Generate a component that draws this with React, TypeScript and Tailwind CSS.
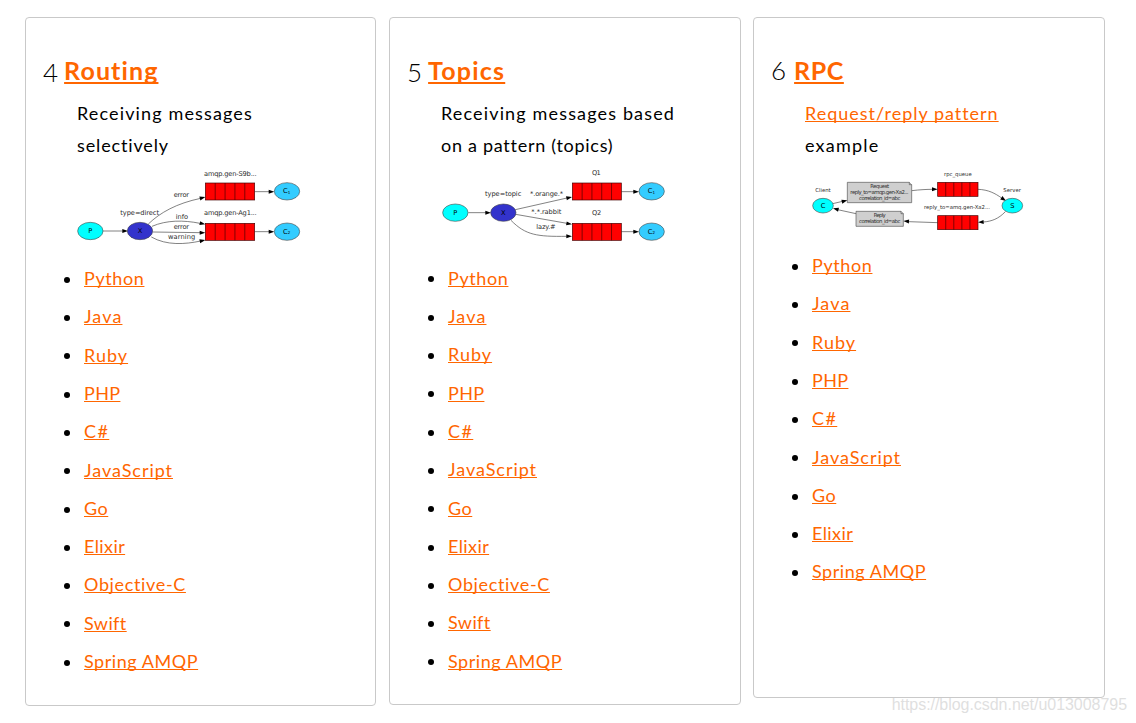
import type { ReactNode } from 'react'

type Tutorial = {
  num: string
  title: string
  numClass: string
  titleClass: string
  cardClass: string
  diagramClass: string
  listClass: string
  description: ReactNode
  diagram: ReactNode
  languages: string[]
}

const allLanguages = [
  'Python',
  'Java',
  'Ruby',
  'PHP',
  'C#',
  'JavaScript',
  'Go',
  'Elixir',
  'Objective-C',
  'Swift',
  'Spring AMQP',
]

const rpcLanguages = allLanguages.filter(
  (l) => l !== 'Objective-C' && l !== 'Swift'
)

const tracking: Record<string, string> = {
  Python: 'tracking-[0.6px]',
  Java: 'tracking-[1.1px]',
  Ruby: 'tracking-[1px]',
  PHP: 'tracking-[0.35px]',
  'C#': 'tracking-[1.4px]',
  JavaScript: 'tracking-[0.95px]',
  Go: 'tracking-[0.5px]',
  Elixir: 'tracking-[0.4px]',
  'Objective-C': 'tracking-[0.65px]',
  Swift: 'tracking-[0.4px]',
  'Spring AMQP': 'tracking-[0.55px]',
}

const linkClass =
  'text-[#ff6600] underline decoration-1 underline-offset-[1px] [text-decoration-skip-ink:none]'

type NodeProps = { x: number; y: number; label: string; fill: string; rx?: number; ry?: number; sub?: string }
const Ellipse = ({ x, y, label, fill, rx = 38, ry = 26, sub }: NodeProps) => (
  <g>
    <ellipse cx={x} cy={y} rx={rx} ry={ry} fill={fill} stroke="#444" strokeWidth={1.8} />
    <text x={sub ? x - 1 : x} y={y + 6} textAnchor="middle" fontSize={20} fill="#000">
      {label}
      {sub && (
        <tspan fontSize={12} dy={2}>
          {sub}
        </tspan>
      )}
    </text>
  </g>
)

type QueueProps = { x: number; y: number; w: number; h: number }
const Queue = ({ x, y, w, h }: QueueProps) => (
  <g stroke="#400" strokeWidth={2}>
    <rect x={x} y={y} width={w} height={h} fill="#ff0000" />
    {[1, 2, 3, 4].map((i) => (
      <line key={i} x1={x + (w * i) / 5} x2={x + (w * i) / 5} y1={y} y2={y + h} />
    ))}
  </g>
)

// arrow line ends at the base of the head, the head is 17 units long
const Arrow = ({ d, x, y, angle = 0 }: { d: string; x: number; y: number; angle?: number }) => (
  <g>
    <path d={d} fill="none" stroke="#444" strokeWidth={2} />
    <path d="M0 0L-17 -6V6Z" fill="#000" transform={`translate(${x} ${y}) rotate(${angle})`} />
  </g>
)

const svgText = 'font-["DejaVu_Sans",sans-serif] fill-[#2b2b2b]'

const RoutingDiagram = () => (
  <svg viewBox="0 0 720 270" className={`block h-[90px] w-60 ${svgText}`} fontSize={20}>
    <Arrow d="M99 213H158" x={174} y={213} />
    <Arrow d="M235 192C270 158 320 130 392 115" x={406} y={111} angle={-15} />
    <Arrow d="M246 199C290 180 340 180 390 190" x={406} y={193} angle={12} />
    <Arrow d="M249 216L390 218" x={406} y={218} />
    <Arrow d="M244 231C290 257 345 253 392 243" x={406} y={240} angle={-12} />
    <Arrow d="M554 95H598" x={613} y={95} />
    <Arrow d="M554 215H598" x={613} y={215} />
    <Ellipse x={61} y={213} label="P" fill="#00ffff" />
    <Ellipse x={210} y={213} label="X" fill="#3333cc" />
    <Queue x={406} y={69} w={148} h={51} />
    <Queue x={406} y={190} w={148} h={51} />
    <Ellipse x={651} y={94} label="C" sub="1" fill="#33ccff" />
    <Ellipse x={651} y={215} label="C" sub="2" fill="#33ccff" />
    <text x={151} y={164} textLength={116}>type=direct</text>
    <text x={311} y={112} textLength={46}>error</text>
    <text x={317} y={177} textLength={37}>info</text>
    <text x={311} y={207} textLength={46}>error</text>
    <text x={294} y={236} textLength={82}>warning</text>
    <text x={402} y={47} textLength={158}>amqp.gen-S9b...</text>
    <text x={402} y={166} textLength={158}>amqp.gen-Ag1...</text>
  </svg>
)

const TopicsDiagram = () => (
  <svg viewBox="0 0 720 270" className={`block h-[90px] w-60 ${svgText}`} fontSize={20}>
    <Arrow d="M103 158H156" x={171} y={158} />
    <Arrow d="M244 149L399 114" x={414} y={111} angle={-12} />
    <Arrow d="M245 163L399 190" x={414} y={193} angle={10} />
    <Arrow d="M231 181C275 226 310 230 398 229" x={414} y={229} />
    <Arrow d="M562 95H600" x={615} y={95} />
    <Arrow d="M562 215H600" x={615} y={215} />
    <Ellipse x={64} y={158} label="P" fill="#00ffff" />
    <Ellipse x={208} y={158} label="X" fill="#3333cc" />
    <Queue x={415} y={69} w={147} h={51} />
    <Queue x={415} y={190} w={147} h={51} />
    <Ellipse x={653} y={94} label="C" sub="1" fill="#33ccff" />
    <Ellipse x={653} y={215} label="C" sub="2" fill="#33ccff" />
    <text x={153} y={108} textLength={109}>type=topic</text>
    <text x={288} y={108} textLength={99}>*.orange.*</text>
    <text x={292} y={162} textLength={90}>*.*.rabbit</text>
    <text x={307} y={208} textLength={58}>lazy.#</text>
    <text x={474} y={46} textLength={26}>Q1</text>
    <text x={474} y={165} textLength={28}>Q2</text>
  </svg>
)

const RpcDiagram = () => (
  <svg viewBox="0 0 720 231" className={`block h-[77px] w-60 ${svgText}`} fontSize={16}>
    <Arrow d="M98 131L128 124" x={142} y={121} angle={-14} />
    <Arrow d="M335 92C360 89 380 88 398 88" x={413} y={88} />
    <Arrow d="M534 88C565 89 585 100 605 114" x={618} y={123} angle={35} />
    <Arrow d="M616 155C595 177 575 184 550 186" x={534} y={187} angle={176} />
    <Arrow d="M413 188L326 185" x={310} y={183} angle={184} />
    <Arrow d="M168 161L113 149" x={99} y={145} angle={194} />
    <g stroke="#555" strokeWidth={2} fill="#cfcfcf">
      <path d="M142 67H328L335 74V128H142Z" />
      <path d="M328 67V74H335" />
      <path d="M168 154H303L310 161V199H168Z" />
      <path d="M303 154V161H310" />
    </g>
    <Ellipse x={69} y={137} label="C" fill="#00ffff" rx={31} ry={22} />
    <Ellipse x={637} y={137} label="S" fill="#00ffff" rx={31} ry={22} />
    <Queue x={413} y={67} w={121} h={42} />
    <Queue x={413} y={167} w={121} h={42} />
    <text x={46} y={97} textLength={46}>Client</text>
    <text x={610} y={97} textLength={53}>Server</text>
    <text x={432} y={48} textLength={83}>rpc_queue</text>
    <text x={372} y={147} textLength={198}>reply_to=amq.gen-Xa2...</text>
    <text x={211} y={84} textLength={56}>Request</text>
    <text x={151} y={102} textLength={174}>reply_to=amqp.gen-Xa2...</text>
    <text x={177} y={119} textLength={124}>correlation_id=abc</text>
    <text x={221} y={172} textLength={36}>Reply</text>
    <text x={177} y={190} textLength={124}>correlation_id=abc</text>
  </svg>
)

const tutorials: Tutorial[] = [
  {
    num: '4',
    title: 'Routing',
    numClass: 'align-[-2px]',
    titleClass: 'tracking-[1.1px]',
    cardClass: 'h-[689px] w-[351px]',
    diagramClass: 'pl-11',
    listClass: 'pt-[10.9px]',
    description: (
      <>
        <span className="tracking-[1.14px]">Receiving messages</span>
        <br />
        <span className="tracking-[0.86px]">selectively</span>
      </>
    ),
    diagram: <RoutingDiagram />,
    languages: allLanguages,
  },
  {
    num: '5',
    title: 'Topics',
    numClass: 'align-[-2px]',
    titleClass: 'tracking-[1.2px]',
    cardClass: 'h-[688px] w-[352px]',
    diagramClass: 'pl-11',
    listClass: 'pt-[10.6px]',
    description: (
      <>
        <span className="tracking-[1.15px]">Receiving messages based</span>
        <br />
        <span className="tracking-[0.72px]">on a pattern (topics)</span>
      </>
    ),
    diagram: <TopicsDiagram />,
    languages: allLanguages,
  },
  {
    num: '6',
    title: 'RPC',
    numClass: '',
    titleClass: 'ml-0.5 tracking-[0.55px]',
    cardClass: 'h-[681px] w-[352px]',
    diagramClass: 'pl-[46px]',
    listClass: 'pt-[10.9px]',
    description: (
      <>
        <a href="#" className={`${linkClass} tracking-[0.98px]`}>
          Request/reply pattern
        </a>
        <br />
        <span className="tracking-[1.2px]">example</span>
      </>
    ),
    diagram: <RpcDiagram />,
    languages: rpcLanguages,
  },
]

const Card = ({ tutorial }: { tutorial: Tutorial }) => (
  <div className={`rounded border border-[#c9c9c9] pt-8 ${tutorial.cardClass}`}>
    <h3 className="flex h-10 items-baseline gap-1.5 pl-[17px] text-[25px] leading-10 whitespace-nowrap">
      <span className="text-[26px] leading-[38px] font-light">
        <span className={tutorial.numClass}>{tutorial.num}</span>
      </span>
      <a
        href="#"
        className={`font-bold text-[#ff6600] underline decoration-2 underline-offset-[2px] [text-decoration-skip-ink:none] ${tutorial.titleClass}`}
      >
        {tutorial.title}
      </a>
    </h3>
    <p className="mt-[7px] pl-[51px] leading-8 whitespace-nowrap">{tutorial.description}</p>
    <div className={`-mt-px ${tutorial.diagramClass}`}>{tutorial.diagram}</div>
    <ul className={`-mt-px pl-[38px] ${tutorial.listClass}`}>
      {tutorial.languages.map((language) => (
        <li key={language} className="flex h-[38.3px] items-center gap-3.5">
          <span className="mt-[1.4px] size-1.5 rounded-full bg-black" />
          <a href="#" className={`mb-0.5 ${linkClass} ${tracking[language]}`}>
            {language}
          </a>
        </li>
      ))}
    </ul>
  </div>
)

export default function App() {
  return (
    <div className="relative h-[723px] w-[1136px] overflow-hidden bg-white font-[Lato,sans-serif] text-lg text-black">
      <div className="grid grid-cols-[364px_364px_352px] items-start pt-[17px] pl-[25px]">
        {tutorials.map((tutorial) => (
          <Card key={tutorial.num} tutorial={tutorial} />
        ))}
      </div>
      <span className="absolute right-[9px] bottom-1.5 font-['Liberation_Sans',Arial,sans-serif] text-base tracking-[-0.04px] text-[#dfdfdf]">
        https://blog.csdn.net/u013008795
      </span>
    </div>
  )
}
